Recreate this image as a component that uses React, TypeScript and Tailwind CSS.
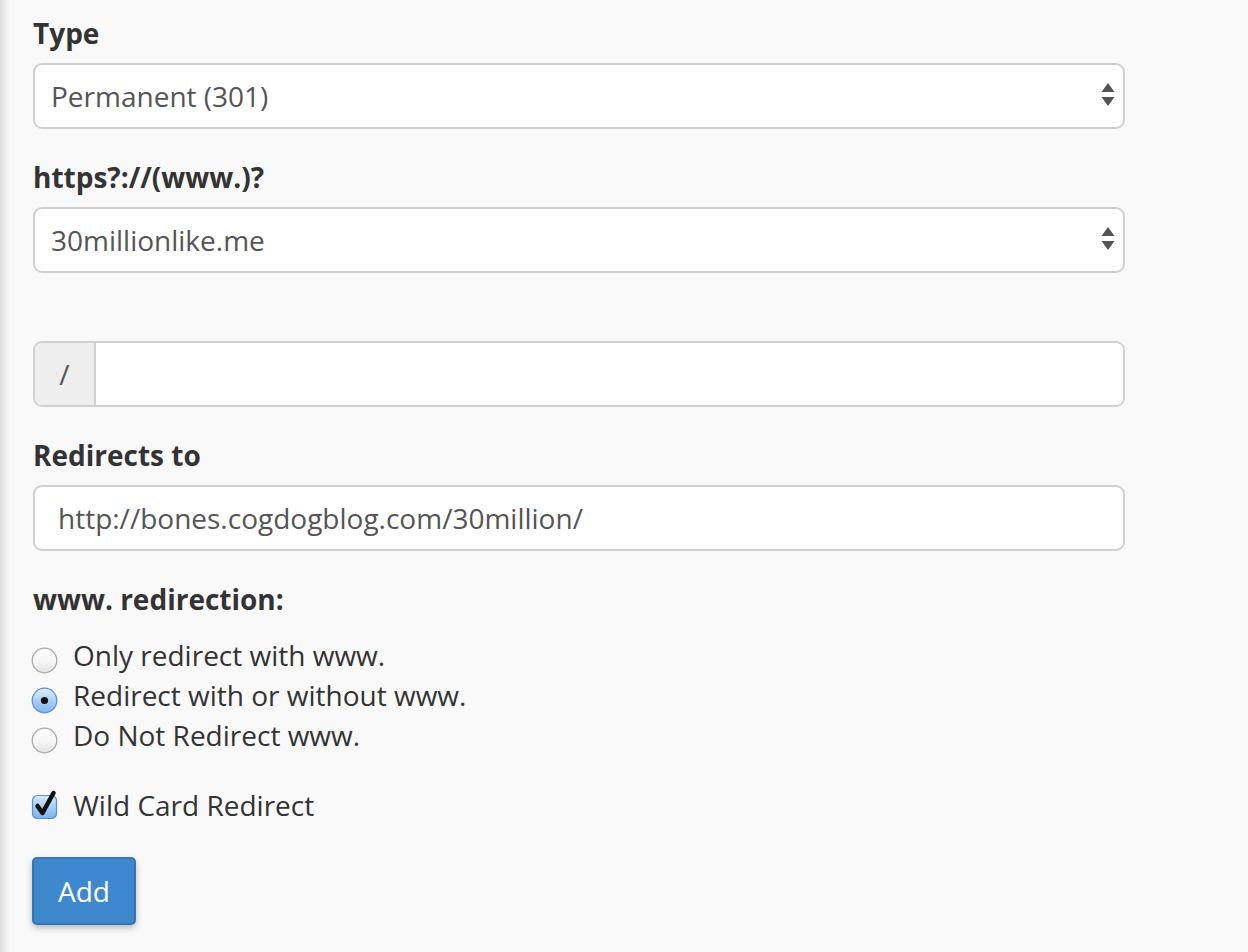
import React from 'react';

const SelectArrows = () => (
    <svg width="14" height="26" viewBox="0 0 14 26" className="absolute right-[8px] top-1/2 -translate-y-1/2">
        <polygon points="7,0 13.5,9 0.5,9" fill="#555" />
        <polygon points="0.5,14 13.5,14 7,23" fill="#555" />
    </svg>
);

const Radio = ({ checked }: { checked?: boolean }) => (
    <svg width="27" height="27" viewBox="0 0 27 27" className="shrink-0 mt-[12px]">
        <defs>
            <linearGradient id="radioOff" x1="0" y1="0" x2="0" y2="1">
                <stop offset="0" stopColor="#ffffff" />
                <stop offset="0.5" stopColor="#f7f7f7" />
                <stop offset="1" stopColor="#e3e3e3" />
            </linearGradient>
            <linearGradient id="radioOn" x1="0" y1="0" x2="0" y2="1">
                <stop offset="0" stopColor="#e3f0fc" />
                <stop offset="0.5" stopColor="#a9d0f5" />
                <stop offset="1" stopColor="#7db6ee" />
            </linearGradient>
        </defs>
        <circle cx="13.5" cy="13.5" r="12.3" fill={checked ? 'url(#radioOn)' : 'url(#radioOff)'} stroke={checked ? '#5b8fc9' : '#a5a5a5'} strokeWidth="1.2" />
        {checked && <circle cx="13.5" cy="13.5" r="3.6" fill="#111" />}
    </svg>
);

const Checkbox = () => (
    <svg width="28" height="32" viewBox="0 0 28 32" className="shrink-0 mt-[3px]">
        <defs>
            <linearGradient id="cbOn" x1="0" y1="0" x2="0" y2="1">
                <stop offset="0" stopColor="#d9ebfc" />
                <stop offset="0.5" stopColor="#a3cdf4" />
                <stop offset="1" stopColor="#78b2ec" />
            </linearGradient>
        </defs>
        <rect x="1.5" y="7.5" width="24" height="23" rx="5" fill="url(#cbOn)" stroke="#5b8fc9" strokeWidth="1.2" />
        <path d="M6.5 18 L11.5 25 L22.5 5" fill="none" stroke="#111" strokeWidth="4.5" strokeLinecap="round" strokeLinejoin="round" />
    </svg>
);

const Label = ({ children }: { children?: React.ReactNode }) => (
    <div className="font-bold text-[#333] text-[28px] leading-[40px] h-[40px] mb-[10px]">{children}</div>
);

const radios = [
    { label: 'Only redirect with www.', checked: false },
    { label: 'Redirect with or without www.', checked: true },
    { label: 'Do Not Redirect www.', checked: false },
];

export default function App() {
    return (
        <div className="min-h-screen flex bg-[#f9f9f9]" style={{ fontFamily: '"Open Sans", sans-serif' }}>
            <div className="w-[10px] shrink-0 bg-gradient-to-r from-[#dedede] via-[#ececec] to-[#f9f9f9]" />
            <div className="pl-[23px] pt-[13px] w-[1115px]">
                <Label>Type</Label>
                <div className="relative h-[66px] bg-white border-2 border-[#d0d0d0] rounded-[9px] flex items-center pl-[16px] text-[28px] text-[#555] mb-[28px]">
                    Permanent (301)
                    <SelectArrows />
                </div>

                <Label>https?://(www.)?</Label>
                <div className="relative h-[66px] bg-white border-2 border-[#d0d0d0] rounded-[9px] flex items-center pl-[16px] text-[28px] text-[#555] mb-[68px]">
                    30millionlike.me
                    <SelectArrows />
                </div>

                <div className="h-[66px] flex border-2 border-[#d0d0d0] rounded-[9px] overflow-hidden mb-[28px]">
                    <div className="w-[61px] bg-[#eeeeee] border-r-2 border-[#d0d0d0] flex items-center justify-center text-[28px] text-[#555]">/</div>
                    <div className="flex-1 bg-white" />
                </div>

                <Label>Redirects to</Label>
                <div className="h-[66px] bg-white border-2 border-[#d0d0d0] rounded-[9px] flex items-center pl-[23px] text-[28px] text-[#555] mb-[28px]">
                    http://bones.cogdogblog.com/30million/
                </div>

                <Label>www. redirection:</Label>
                <div className="flex flex-col mt-[16px]">
                    {radios.map((r) => (
                        <div key={r.label} className="flex h-[40px] text-[28px] leading-[40px] text-[#333]">
                            <div className="-ml-[2px] w-[42px]">
                                <Radio checked={r.checked} />
                            </div>
                            <span>{r.label}</span>
                        </div>
                    ))}
                </div>

                <div className="flex h-[40px] mt-[30px] text-[28px] leading-[40px] text-[#333]">
                    <div className="-ml-[2px] w-[42px]">
                        <Checkbox />
                    </div>
                    <span>Wild Card Redirect</span>
                </div>

                <button className="mt-[32px] h-[68px] px-[24px] bg-[#3e88cd] border-2 border-[#3674b3] rounded-[5px] text-white text-[28px] shadow-[0_3px_6px_rgba(0,0,0,0.25)] -ml-[1px]">
                    Add
                </button>
            </div>
        </div>
    );
}
